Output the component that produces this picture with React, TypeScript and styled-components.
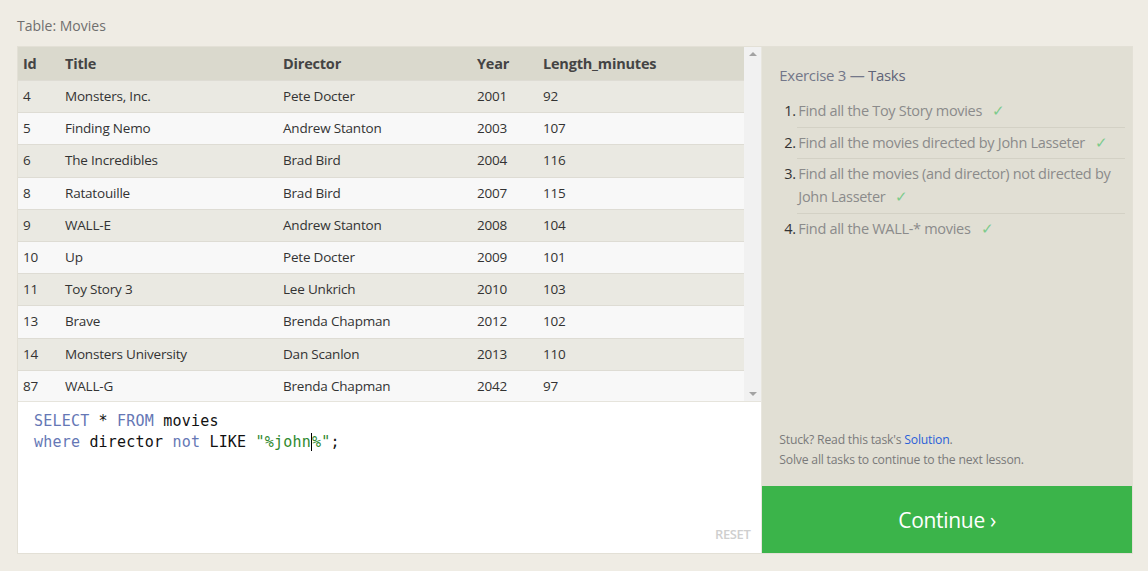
import React from "react";
import styled, { createGlobalStyle } from "styled-components";

const Global = createGlobalStyle`
  html, body { margin: 0; padding: 0; background: #efece4; }
  body { font-family: "Open Sans", "Noto Sans", sans-serif; }
  * { box-sizing: border-box; }
`;

const Page = styled.div`
  width: 1148px;
  height: 571px;
  padding: 16px 15px 0 17px;
`;

const Caption = styled.div`
  font-size: 14px;
  color: #6f6f6f;
  height: 20px;
  line-height: 20px;
  margin-bottom: 10px;
`;

const Workspace = styled.div`
  display: flex;
  width: 1116px;
  border: 1px solid #e3e0d6;
`;

const LeftCol = styled.div`
  width: 744px;
  display: flex;
  flex-direction: column;
  background: #fff;
`;

const TableArea = styled.div`
  display: flex;
  height: 355px;
  border-bottom: 1px solid #e6e4dc;
`;

const TableWrap = styled.div`
  flex: 1;
  overflow: hidden;
`;

const Row = styled.div<{ $kind: "head" | "odd" | "even" }>`
  display: grid;
  grid-template-columns: 42px 218px 194px 66px 1fr;
  align-items: center;
  padding-left: 5px;
  height: ${(p) => (p.$kind === "head" ? "33px" : "32.2px")};
  padding-bottom: ${(p) => (p.$kind === "head" ? "0" : "1px")};
  background: ${(p) =>
    p.$kind === "head" ? "#dad9cd" : p.$kind === "odd" ? "#eae9e2" : "#f8f8f8"};
  border-top: ${(p) => (p.$kind === "head" ? "none" : "1px solid #dedcd4")};
  font-size: ${(p) => (p.$kind === "head" ? "14.5px" : "13.5px")};
  font-weight: ${(p) => (p.$kind === "head" ? 700 : 400)};
  color: ${(p) => (p.$kind === "head" ? "#444" : "#333")};
  letter-spacing: -0.2px;
`;

const Cell = styled.div`
  white-space: nowrap;
`;

const Scrollbar = styled.div`
  width: 17px;
  background: #f1f1f1;
  display: flex;
  flex-direction: column;
  justify-content: space-between;
  align-items: center;
  padding: 5px 0 5px;
`;

const Arrow = styled.div<{ $down?: boolean }>`
  width: 0;
  height: 0;
  border-left: 4px solid transparent;
  border-right: 4px solid transparent;
  ${(p) =>
    p.$down ? "border-top: 4px solid #a3a3a3;" : "border-bottom: 4px solid #a3a3a3;"}
`;

const Editor = styled.div`
  position: relative;
  height: 151px;
  background: #fff;
  padding: 9px 16px;
  font-family: "DejaVu Sans Mono", "Liberation Mono", monospace;
  font-size: 15px;
  line-height: 20.5px;
  color: #111;
  letter-spacing: 0.2px;
`;

const Line = styled.div`
  white-space: pre;
`;

const Kw = styled.span`
  color: #6577b5;
`;

const Str = styled.span`
  color: #2f8a2f;
`;

const Caret = styled.span`
  display: inline-block;
  width: 0;
  height: 18px;
  border-left: 1.5px solid #000;
  vertical-align: -4px;
`;

const Reset = styled.div`
  position: absolute;
  right: 11px;
  bottom: 9px;
  font-family: "Open Sans", sans-serif;
  font-size: 13px;
  font-weight: 600;
  color: #cfcfcf;
  letter-spacing: -0.4px;
`;

const RightCol = styled.div`
  width: 371px;
  display: flex;
  flex-direction: column;
  background: #e1dfd4;
  border-left: 1px solid #e8e6de;
`;

const TaskPanel = styled.div`
  flex: 1;
  padding: 18px 7px 0 17px;
  display: flex;
  flex-direction: column;
`;

const PanelTitle = styled.div`
  font-size: 15px;
  color: #737789;
  letter-spacing: -0.3px;
  margin-bottom: 10px;
  span { color: #5f6478; }
`;

const TaskList = styled.ol`
  list-style: none;
  margin: 0;
  padding: 0 0 0 5px;
`;

const Task = styled.li`
  display: flex;
  font-size: 14.5px;
  line-height: 23px;
  letter-spacing: -0.3px;
  color: #8b8b8b;
  padding: 4px 0 4.5px;
  position: relative;
  &:not(:first-child)::before {
    content: "";
    position: absolute;
    left: 13px;
    right: 0;
    top: 0;
    border-top: 1px solid #d3d1c5;
  }
`;

const Num = styled.span`
  color: #333;
  width: 14px;
  flex: none;
`;

const TaskText = styled.span<{ $done?: boolean }>`
  &::after {
    content: ${(p) => (p.$done ? '"✓"' : '""')};
    color: #7ccb8c;
    margin-left: 10px;
  }
`;

const Spacer = styled.div`
  flex: 1;
`;

const Hint = styled.div`
  font-size: 12.2px;
  line-height: 20px;
  color: #7a7a7a;
  letter-spacing: -0.2px;
  padding-bottom: 16px;
  a { color: #2a5fd8; text-decoration: none; }
`;

const ContinueButton = styled.button`
  height: 67px;
  border: none;
  background: #3bb44a;
  color: #fff;
  font-family: "Open Sans", sans-serif;
  font-size: 21px;
  letter-spacing: -0.3px;
  cursor: pointer;
`;

const movies: [string, string, string, string, string][] = [
  ["4", "Monsters, Inc.", "Pete Docter", "2001", "92"],
  ["5", "Finding Nemo", "Andrew Stanton", "2003", "107"],
  ["6", "The Incredibles", "Brad Bird", "2004", "116"],
  ["8", "Ratatouille", "Brad Bird", "2007", "115"],
  ["9", "WALL-E", "Andrew Stanton", "2008", "104"],
  ["10", "Up", "Pete Docter", "2009", "101"],
  ["11", "Toy Story 3", "Lee Unkrich", "2010", "103"],
  ["13", "Brave", "Brenda Chapman", "2012", "102"],
  ["14", "Monsters University", "Dan Scanlon", "2013", "110"],
  ["87", "WALL-G", "Brenda Chapman", "2042", "97"],
];

const tasks = [
  "Find all the Toy Story movies",
  "Find all the movies directed by John Lasseter",
  "Find all the movies (and director) not directed by John Lasseter",
  "Find all the WALL-* movies",
];

export default function App() {
  return (
    <Page>
      <Global />
      <Caption>Table: Movies</Caption>
      <Workspace>
        <LeftCol>
          <TableArea>
            <TableWrap>
              <Row $kind="head">
                <Cell>Id</Cell>
                <Cell>Title</Cell>
                <Cell>Director</Cell>
                <Cell>Year</Cell>
                <Cell>Length_minutes</Cell>
              </Row>
              {movies.map((m, i) => (
                <Row key={m[0]} $kind={i % 2 === 0 ? "odd" : "even"}>
                  {m.map((v, j) => (
                    <Cell key={j}>{v}</Cell>
                  ))}
                </Row>
              ))}
            </TableWrap>
            <Scrollbar>
              <Arrow />
              <Arrow $down />
            </Scrollbar>
          </TableArea>
          <Editor>
            <Line>
              <Kw>SELECT</Kw> * <Kw>FROM</Kw> movies
            </Line>
            <Line>
              <Kw>where</Kw> director <Kw>not</Kw> LIKE <Str>"%john</Str>
              <Caret />
              <Str>%"</Str>;
            </Line>
            <Reset>RESET</Reset>
          </Editor>
        </LeftCol>
        <RightCol>
          <TaskPanel>
            <PanelTitle>
              Exercise 3 — <span>Tasks</span>
            </PanelTitle>
            <TaskList>
              {tasks.map((t, i) => (
                <Task key={i}>
                  <Num>{i + 1}.</Num>
                  <TaskText $done>{t}</TaskText>
                </Task>
              ))}
            </TaskList>
            <Spacer />
            <Hint>
              Stuck? Read this task's <a href="#">Solution</a>.
              <br />
              Solve all tasks to continue to the next lesson.
            </Hint>
          </TaskPanel>
          <ContinueButton>Continue ›</ContinueButton>
        </RightCol>
      </Workspace>
    </Page>
  );
}
